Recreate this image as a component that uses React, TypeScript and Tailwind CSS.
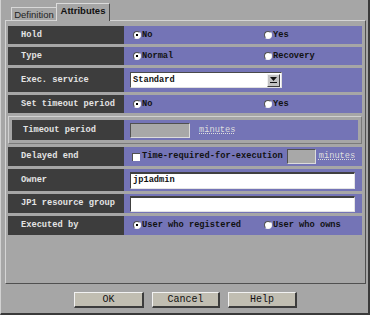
import React from "react";

function Radio({ checked }: { checked: boolean }) {
  return (
    <span className="relative inline-block w-[8px] h-[8px] rounded-full bg-white border border-t-[#505050] border-l-[#505050] border-b-[#f4f4f4] border-r-[#f4f4f4] shrink-0">
      {checked && <span className="absolute left-[2px] top-[2px] w-[2px] h-[2px] bg-black" />}
    </span>
  );
}

function Opt({ checked, label, first }: { checked: boolean; label: string; first?: boolean }) {
  return (
    <div className={first ? "flex items-center w-[131px] gap-[1px]" : "flex items-center gap-[1px]"}>
      <Radio checked={checked} />
      <span className="font-bold text-[#111] leading-none">{label}</span>
    </div>
  );
}

function Row({ label, h, children }: { label: string; h: string; children?: React.ReactNode }) {
  return (
    <div className={`flex ${h}`}>
      <div className="w-[116px] bg-[#3d3d3d] text-[#e4e4e4] pl-[13px] flex items-center font-bold leading-none">
        {label}
      </div>
      <div className="flex-1 bg-[#7474b6] flex items-center">{children}</div>
    </div>
  );
}

function Btn({ w, label }: { w: string; label: string }) {
  return (
    <div
      className={`${w} h-[16px] bg-[#c1beb2] border-t border-l border-t-[#f2f2f2] border-l-[#f2f2f2] border-b-2 border-r-2 border-b-[#3c3c3c] border-r-[#3c3c3c] flex items-center justify-center text-[10px] text-[#111] leading-none`}
    >
      {label}
    </div>
  );
}

export default function App() {
  return (
    <div className="w-[370px] h-[315px] bg-[#a6a6a6] border-l border-l-[#d2d2d2] border-r-2 border-r-[#3a3a3a] border-b-2 border-b-[#3a3a3a] pl-[4px] overflow-hidden font-['Liberation_Mono',monospace] text-[8.7px]">
      {/* tabs */}
      <div className="flex items-end h-[20px] pl-[6px] pt-[3px]">
        <div className="h-[13px] w-[45px] border-t border-l border-t-[#d8d8d8] border-l-[#d8d8d8] flex items-center justify-center font-['Liberation_Sans',Arial,sans-serif] text-[9.5px] text-[#222] leading-none pt-[1px]">
          Definition
        </div>
        <div className="relative z-10 h-[18px] -mb-[1px] w-[54px] bg-[#a6a6a6] border-t border-l border-t-[#dcdcdc] border-l-[#dcdcdc] border-r border-r-[#4a4a4a] flex items-start justify-center pt-[2px] font-['Liberation_Sans',Arial,sans-serif] font-bold text-[9.5px] text-[#111] leading-none">
          Attributes
        </div>
      </div>

      {/* panel */}
      <div className="w-[361px] h-[264px] border-t border-l border-t-[#d4d4d4] border-l-[#d4d4d4] border-b border-r border-b-[#505050] border-r-[#505050] pl-[2px] pr-[3px] pt-[5px] flex flex-col gap-[3px]">
        <Row label="Hold" h="h-[18px]">
          <div className="flex items-center pl-[9px]">
            <Opt first checked label="No" />
            <Opt checked={false} label="Yes" />
          </div>
        </Row>
        <Row label="Type" h="h-[18px]">
          <div className="flex items-center pl-[9px]">
            <Opt first checked label="Normal" />
            <Opt checked={false} label="Recovery" />
          </div>
        </Row>
        <Row label="Exec. service" h="h-[24px]">
          <div className="ml-[6px] w-[152px] h-[16px] bg-white border-t border-l border-t-[#4a4a4a] border-l-[#4a4a4a] border-b border-r border-b-[#e0e0e0] border-r-[#e0e0e0] flex items-center">
            <span className="flex-1 pl-[2px] font-bold text-[#111] leading-none">Standard</span>
            <div className="w-[13px] h-[13px] mr-[1px] bg-[#c4c4c4] border-t border-l border-t-[#f0f0f0] border-l-[#f0f0f0] border-b border-r border-b-[#404040] border-r-[#404040] flex flex-col items-center justify-center gap-[1px]">
              <svg width="7" height="4" viewBox="0 0 7 4">
                <path d="M0 0 H7 L3.5 4 Z" fill="#111" />
              </svg>
              <div className="w-[7px] h-[1px] bg-[#111]" />
            </div>
          </div>
        </Row>
        <Row label="Set timeout period" h="h-[18px]">
          <div className="flex items-center pl-[9px]">
            <Opt first checked label="No" />
            <Opt checked={false} label="Yes" />
          </div>
        </Row>

        {/* timeout group */}
        <div className="h-[28px] border-t border-l border-t-[#d0d0d0] border-l-[#d0d0d0] border-b border-r border-b-[#7a7a7a] border-r-[#7a7a7a] p-[3px] flex">
          <div className="w-[112px] bg-[#3d3d3d] text-[#e4e4e4] pl-[11px] flex items-center font-bold leading-none">
            Timeout period
          </div>
          <div className="flex-1 bg-[#7474b6] flex items-center">
            <div className="ml-[6px] w-[60px] h-[15px] bg-[#a8a8a8] border-t border-l border-t-[#505050] border-l-[#505050] border-b border-r border-b-[#dcdcdc] border-r-[#dcdcdc]" />
            <span className="ml-[9px] text-[#dedede] underline decoration-dotted leading-none">minutes</span>
          </div>
        </div>

        <Row label="Delayed end" h="h-[19px]">
          <div className="flex items-center pl-[8px]">
            <span className="w-[8px] h-[8px] bg-white border-t border-l border-t-[#505050] border-l-[#505050]" />
            <span className="ml-[2px] font-bold text-[#111] leading-none">Time-required-for-execution</span>
            <div className="ml-[4px] w-[29px] h-[15px] bg-[#a8a8a8] border-t border-l border-t-[#505050] border-l-[#505050] border-b border-r border-b-[#dcdcdc] border-r-[#dcdcdc]" />
            <span className="ml-[3px] text-[#dedede] underline decoration-dotted leading-none">minutes</span>
          </div>
        </Row>
        <Row label="Owner" h="h-[22px]">
          <div className="ml-[6px] w-[225px] h-[17px] bg-white border-t-2 border-l border-t-[#404040] border-l-[#404040] border-b border-r border-b-[#e4e4e4] border-r-[#e4e4e4] flex items-center pl-[2px]">
            <span className="text-[#111] font-bold leading-none">jp1admin</span>
          </div>
        </Row>
        <Row label="JP1 resource group" h="h-[19px]">
          <div className="ml-[6px] w-[225px] h-[16px] bg-white border-t-2 border-l border-t-[#404040] border-l-[#404040] border-b border-r border-b-[#e4e4e4] border-r-[#e4e4e4]" />
        </Row>
        <Row label="Executed by" h="h-[19px]">
          <div className="flex items-center pl-[9px]">
            <Opt first checked label="User who registered" />
            <Opt checked={false} label="User who owns" />
          </div>
        </Row>
      </div>

      {/* buttons */}
      <div className="flex justify-center gap-[8px] mt-[8px] pr-[2px]">
        <Btn w="w-[70px]" label="OK" />
        <Btn w="w-[68px]" label="Cancel" />
        <Btn w="w-[69px]" label="Help" />
      </div>
    </div>
  );
}
